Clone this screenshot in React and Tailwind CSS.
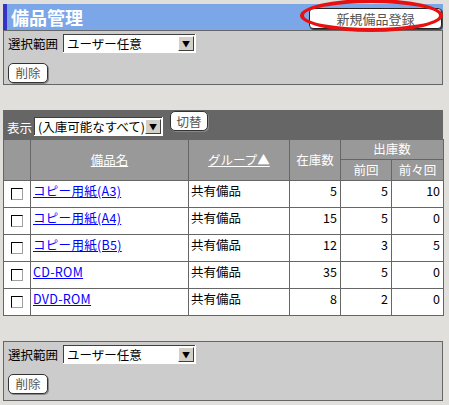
import { useState } from 'react';

const font = { fontFamily: '"MS PGothic", "Noto Sans CJK JP", sans-serif' };

const rows = [
  { name: 'コピー用紙(A3)', group: '共有備品', stock: 5, prev: 5, prev2: 10 },
  { name: 'コピー用紙(A4)', group: '共有備品', stock: 15, prev: 5, prev2: 0 },
  { name: 'コピー用紙(B5)', group: '共有備品', stock: 12, prev: 3, prev2: 5 },
  { name: 'CD-ROM', group: '共有備品', stock: 35, prev: 5, prev2: 0 },
  { name: 'DVD-ROM', group: '共有備品', stock: 8, prev: 2, prev2: 0 },
];

function Select({ value, width }) {
  return (
    <div className={`flex h-[19px] shrink-0 items-stretch border-b border-r border-white bg-white ${width}`}>
      <div className="flex flex-1 items-stretch border-t border-l border-[#404040]">
        <span className="flex-1 overflow-hidden whitespace-nowrap pl-[3px] text-[12.5px] leading-[17px] text-black">{value}</span>
        <span className="my-[1px] mr-[1px] flex w-[16px] items-center justify-center border border-t-white border-l-white border-r-[#404040] border-b-[#404040] bg-[#d4d0c8] text-[8px] leading-none text-black">▼</span>
      </div>
    </div>
  );
}

function Btn({ children, className = '' }) {
  return (
    <button className={`shrink-0 whitespace-nowrap rounded-[5px] border border-[#333] bg-white px-0 text-[12.5px] leading-[17px] text-[#555] shadow-[1px_1px_0_#888] ${className}`}>
      {children}
    </button>
  );
}

function Panel({ children, className = '' }) {
  return (
    <div className={`border border-[#666] bg-[#cccccc] px-[4px] ${className}`}>{children}</div>
  );
}

function RangePanel() {
  return (
    <>
      <div className="flex items-center gap-[5px] pt-[3px]">
        <span className="text-[12.5px] leading-[17px] text-black">選択範囲</span>
        <Select value="ユーザー任意" width="w-[133px]" />
      </div>
      <div className="pt-[6px]">
        <Btn className="h-[20px] w-[40px]">削除</Btn>
      </div>
    </>
  );
}

function Check() {
  const [on, setOn] = useState(false);
  return (
    <span
      onClick={() => setOn(!on)}
      className="inline-block h-[12px] w-[12px] border border-t-[#000] border-l-[#000] border-r-[#a0a0a0] border-b-[#a0a0a0] bg-white align-top"
    >
      {on ? <span className="block text-center text-[9px] leading-[10px]">✓</span> : null}
    </span>
  );
}

export default function App() {
  const th = 'border border-[#666] bg-[#999999] text-[12.5px] font-normal text-white';
  const td = 'border border-[#666] bg-white align-top text-[12.5px] leading-[15px] pt-[2px]';
  return (
    <div className="h-[405px] w-[449px] overflow-hidden bg-[#e0dfdc] pt-[4px] pl-[3px]" style={font}>
      <div className="w-[440px]">
        <div className="relative flex h-[26px] items-center justify-between border-l-[4px] border-[#3434c8] bg-[#7ba6e8] pl-[4px] pr-[1px]">
          <span className="text-[18px] font-bold leading-[22px] text-white">備品管理</span>
          <div className="relative">
            <button className="h-[21px] w-[133px] rounded-[4px] border border-[#222] bg-white text-[13px] leading-[19px] text-[#555] shadow-[1px_1px_0_#444]">
              新規備品登録
            </button>
            <span className="pointer-events-none absolute left-[-9px] top-[-6px] h-[33px] w-[143px] rounded-[50%] border-[4px] border-[#e81010]" />
          </div>
        </div>

        <Panel className="h-[55px]">
          <RangePanel />
        </Panel>

        <div className="mt-[25px]">
          <div className="flex h-[29px] items-end bg-[#666666] pb-[3px] pl-[4px]">
            <span className="mr-[2px] text-[12.5px] leading-[17px] text-white">表示</span>
            <Select value="(入庫可能なすべて)" width="w-[129px]" />
            <Btn className="mb-[5px] ml-[7px] h-[20px] w-[38px]">切替</Btn>
          </div>
          <table className="w-[440px] table-fixed border-collapse">
            <colgroup>
              <col className="w-[27px]" />
              <col className="w-[158px]" />
              <col className="w-[101px]" />
              <col className="w-[51px]" />
              <col className="w-[51px]" />
              <col className="w-[52px]" />
            </colgroup>
            <thead>
              <tr className="h-[20px]">
                <th rowSpan={2} className={th}></th>
                <th rowSpan={2} className={th}><span className="underline">備品名</span></th>
                <th rowSpan={2} className={th}><span className="underline">グループ▲</span></th>
                <th rowSpan={2} className={th}>在庫数</th>
                <th colSpan={2} className={th}>出庫数</th>
              </tr>
              <tr className="h-[21px]">
                <th className={th}>前回</th>
                <th className={th}>前々回</th>
              </tr>
            </thead>
            <tbody>
              {rows.map((r) => (
                <tr key={r.name} className="h-[27px]">
                  <td className={`${td} pt-[7px] text-center`}><Check /></td>
                  <td className={`${td} pl-[2px]`}>
                    <a href="#" className="tracking-[0.3px] text-[#0000ff] underline">{r.name}</a>
                  </td>
                  <td className={`${td} pl-[2px] text-black`}>{r.group}</td>
                  <td className={`${td} pr-[3px] text-right text-black`}>{r.stock}</td>
                  <td className={`${td} pr-[3px] text-right text-black`}>{r.prev}</td>
                  <td className={`${td} pr-[3px] text-right text-black`}>{r.prev2}</td>
                </tr>
              ))}
            </tbody>
          </table>
        </div>

        <Panel className="mt-[25px] h-[60px]">
          <RangePanel />
        </Panel>
      </div>
    </div>
  );
}
